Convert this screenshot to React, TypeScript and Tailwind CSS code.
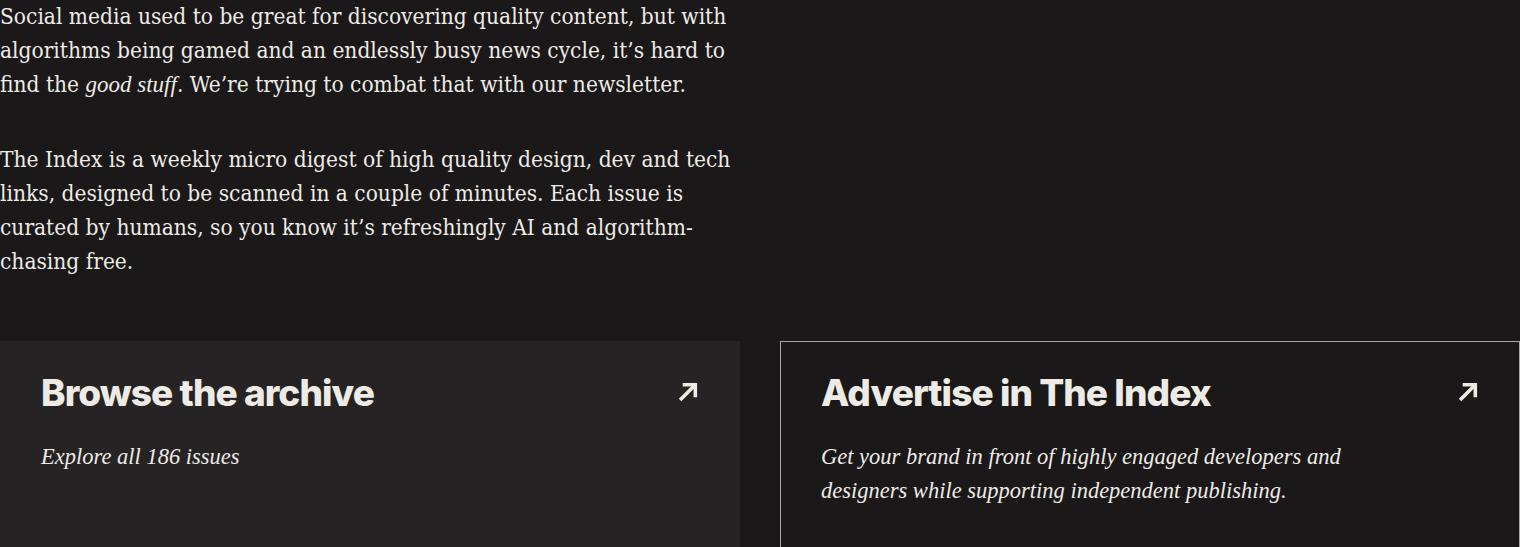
const body = "font-['DejaVu_Serif_Condensed','DejaVu_Serif',serif] font-stretch-condensed";
const italic = "font-['Liberation_Serif',serif] italic";
const sans = "font-['Inter',sans-serif]";

const cards = [
  {
    title: "Browse the archive",
    blurb: "Explore all 186 issues",
    className: "bg-[#252324] border border-transparent",
  },
  {
    title: "Advertise in The Index",
    blurb:
      "Get your brand in front of highly engaged developers and designers while supporting independent publishing.",
    className: "bg-[#1a1819] border border-[#a9a6a2]",
  },
];

// diagonal arrow used on the link cards
function Arrow() {
  return (
    <svg viewBox="0 0 20 20" className="mt-[12px] w-[21px] h-[21px] shrink-0" fill="none" stroke="currentColor" strokeWidth={3.4}>
      <path d="M2 18 L16.5 3.5" />
      <path d="M4.5 3.5 H16.5 V15.5" />
    </svg>
  );
}

export default function App() {
  return (
    <div className="h-screen bg-[#1a1819] text-[#eeebe5] overflow-hidden">
      <section className={`max-w-[740px] ${body} text-[22.5px] leading-[34px] -mt-px`}>
        <p className="mb-[40px]">
          Social media used to be great for discovering quality content, but with
          algorithms being gamed and an endlessly busy news cycle, it’s hard to
          find the <em className={`${italic} text-[23px]`}>good stuff</em>. We’re trying to combat that with our newsletter.
        </p>
        <p>
          The Index is a weekly micro digest of high quality design, dev and tech
          links, designed to be scanned in a couple of minutes. Each issue is
          curated by humans, so you know it’s refreshingly AI and algorithm-chasing free.
        </p>
      </section>

      <div className="grid grid-cols-2 gap-10 mt-[63px]">
        {cards.map((card) => (
          <a key={card.title} href="#" className={`block min-h-[260px] px-10 pt-[27px] pb-10 ${card.className}`}>
            <div className="flex items-start justify-between">
              <h3 className={`${sans} text-[37px] leading-[48px] font-extrabold tracking-[-0.025em]`}>{card.title}</h3>
              <Arrow />
            </div>
            <p className={`${italic} text-[22.5px] leading-[34px] mt-[23px] max-w-[560px]`}>{card.blurb}</p>
          </a>
        ))}
      </div>
    </div>
  );
}
